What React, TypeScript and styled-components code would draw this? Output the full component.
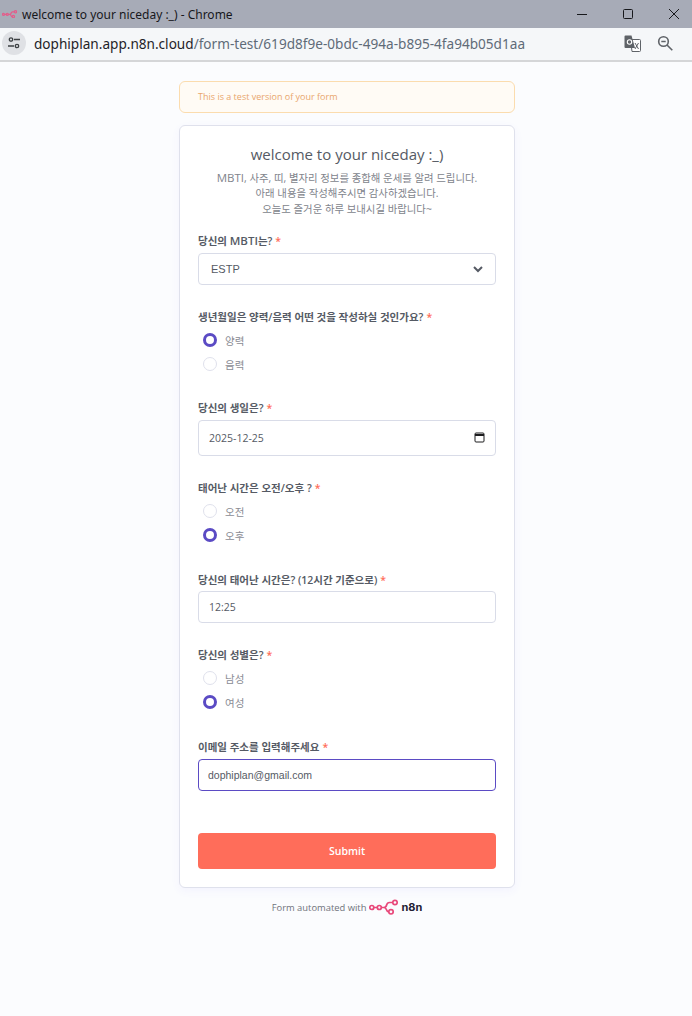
import React from 'react'
import styled, { createGlobalStyle } from 'styled-components'

const GlobalStyle = createGlobalStyle`
  html, body {
    margin: 0;
    padding: 0;
    background: #fbfcfe;
  }
  * {
    box-sizing: border-box;
  }
`

const sans = `"Open Sans", "Noto Sans CJK KR", sans-serif`

const Page = styled.div`
  width: 692px;
  height: 1016px;
  overflow: hidden;
  display: flex;
  flex-direction: column;
  font-family: ${sans};
`

const TitleBar = styled.div`
  height: 28px;
  flex: none;
  display: flex;
  align-items: center;
  padding-left: 2px;
  background: #a7abb7;
  color: #17181c;
`

const WindowTitle = styled.span`
  margin-left: 5px;
  font-family: "Noto Sans", sans-serif;
  font-size: 12px;
  white-space: nowrap;
`

const WindowControls = styled.div`
  margin-left: auto;
  margin-right: -5px;
  display: flex;
  align-items: center;
`

const WindowButton = styled.div`
  width: 46px;
  height: 28px;
  display: flex;
  align-items: center;
  justify-content: center;
`

const AddressBar = styled.div`
  height: 34px;
  flex: none;
  display: flex;
  align-items: center;
  padding: 0 19px 2px 2px;
  background: #f5f7f9;
  border-bottom: 2px solid;
  border-image: linear-gradient(#a4a5a8 50%, #d5d6d8 50%) 2;
`

const SiteButton = styled.div`
  width: 24px;
  height: 24px;
  flex: none;
  display: flex;
  align-items: center;
  justify-content: center;
  border-radius: 50%;
  background: #dfe1e5;
`

const Url = styled.div`
  margin-left: 8px;
  font-family: "Noto Sans", sans-serif;
  font-size: 13.6px;
  color: #5f6b78;
  white-space: nowrap;
`

const UrlHost = styled.span`
  color: #1f2328;
`

const AddressIcons = styled.div`
  margin-left: auto;
  display: flex;
  align-items: center;
  gap: 16px;
`

const Content = styled.main`
  width: 336px;
  margin: 19px 0 0 179px;
  display: flex;
  flex-direction: column;
`

const TestBanner = styled.div`
  height: 32px;
  padding: 0 18px 2px;
  display: flex;
  align-items: center;
  border: 1px solid #fbdcae;
  border-radius: 6px;
  background: #fffbf5;
  color: #e9a66c;
  font-size: 9px;
`

const Card = styled.form`
  margin-top: 12px;
  height: 763px;
  padding: 17px 18px 0;
  display: flex;
  flex-direction: column;
  border: 1px solid #dfe1ec;
  border-radius: 6px;
  background: #ffffff;
  box-shadow: 0 3px 10px rgba(99, 77, 255, 0.05);
`

const CardTitle = styled.h1`
  margin: 0;
  text-align: center;
  font-size: 15px;
  line-height: 22px;
  font-weight: 400;
  color: #555a64;
`

const CardIntro = styled.p`
  margin: 5px 0 0;
  text-align: center;
  font-size: 10.4px;
  line-height: 15.4px;
  color: #81848c;
`

const Latin = styled.span`
  font-size: 11.5px;
`

const Field = styled.div<{ $top: number }>`
  margin-top: ${p => p.$top}px;
  display: flex;
  flex-direction: column;
`

const Label = styled.label<{ $gap?: number }>`
  height: 16px;
  margin-bottom: ${p => p.$gap ?? 4}px;
  font-size: 10.5px;
  line-height: 16px;
  font-weight: 600;
  color: #555a64;
`

const Required = styled.span`
  margin-left: 3px;
  color: #ff6d5a;
`

const SelectWrap = styled.div`
  position: relative;
`

const inputBase = `
  display: block;
  width: 100%;
  height: 32px;
  margin: 0;
  border: 1px solid #d9dce8;
  border-radius: 4px;
  background: #ffffff;
  outline: none;
  font-size: 10.5px;
  color: #555a64;
`

const Select = styled.select`
  ${inputBase}
  appearance: none;
  padding: 0 12px;
  font-size: 11px;
  font-family: "Liberation Sans", sans-serif;
`

const Chevron = styled.svg`
  position: absolute;
  top: 11px;
  right: 13px;
  pointer-events: none;
`

const CalendarIcon = styled.svg`
  position: absolute;
  top: 12px;
  right: 11px;
  pointer-events: none;
`

const TextInput = styled.input<{ $height?: number; $focused?: boolean }>`
  ${inputBase}
  height: ${p => p.$height ?? 32}px;
  padding: 0 ${p => (p.$focused ? 9 : 10)}px;
  font-family: ${p => (p.$focused ? '"Liberation Sans", sans-serif' : sans)};
  border-color: ${p => (p.$focused ? '#5b4bc4' : '#d9dce8')};
`

const RadioGroup = styled.div`
  margin-top: -1px;
  display: flex;
  flex-direction: column;
`

const RadioRow = styled.label`
  height: 24px;
  display: flex;
  align-items: center;
  padding-left: 5px;
  font-size: 10.5px;
  color: #8a8c94;
`

const RadioInput = styled.input`
  appearance: none;
  width: 14px;
  height: 14px;
  margin: -1px 8px 0 0;
  border: 1px solid #dfe1ec;
  border-radius: 50%;
  background: #ffffff;
  &:checked {
    border: 3.5px solid #5b4bc4;
  }
`

const SubmitButton = styled.button`
  height: 36px;
  margin-top: 42px;
  padding: 0;
  border: none;
  border-radius: 4px;
  background: #ff6d5a;
  color: #ffffff;
  font-family: ${sans};
  font-size: 10.5px;
  font-weight: 600;
`

const Footer = styled.footer`
  margin-top: 11px;
  display: flex;
  align-items: center;
  justify-content: center;
  gap: 3px;
  font-size: 9.4px;
  color: #70737c;
`

const Brand = styled.span`
  font-family: "Inter", sans-serif;
  font-size: 11px;
  font-weight: 700;
  color: #1f2033;
`

const N8nLogo = ({ width, color = '#e8487a', stroke = 1.7 }: { width: number; color?: string; stroke?: number }) => (
  <svg width={width} height={(width * 16) / 29} viewBox="0 0 29 16" fill="none" stroke={color} strokeWidth={stroke}>
    <circle cx="2.800" cy="8.500" r="2" />
    <circle cx="10.300" cy="8.500" r="2" />
    <circle cx="26" cy="3.500" r="2.200" />
    <circle cx="22" cy="12.800" r="2.200" />
    <path d="M4.800 8.500h3.500M12.300 8.500h2.700c2 0 2.400-1.300 2.700-2.700.4-1.700 1.300-2.300 2.800-2.300h2.800M15 8.500c1.600 0 2.100 1 2.500 2.300.4 1.400 1 2 2.300 2" />
  </svg>
)

const MBTI = ['ESTP']

const RadioField = ({ name, options, checked }: { name: string; options: string[]; checked: string }) => (
  <RadioGroup>
    {options.map(o => (
      <RadioRow key={o}>
        <RadioInput type="radio" name={name} value={o} defaultChecked={o === checked} />
        {o}
      </RadioRow>
    ))}
  </RadioGroup>
)

const App = () => (
  <Page>
    <GlobalStyle />
    <TitleBar>
      <N8nLogo width={15} color="#e35d8a" stroke={2.4} />
      <WindowTitle>welcome to your niceday :_) - Chrome</WindowTitle>
      <WindowControls>
        <WindowButton>
          <svg width="12" height="12" viewBox="0 0 12 12" stroke="#17181c" fill="none">
            <path d="M1 6.500h10" />
          </svg>
        </WindowButton>
        <WindowButton>
          <svg width="12" height="12" viewBox="0 0 12 12" stroke="#17181c" fill="none">
            <rect x="1.500" y="1.500" width="9" height="9" rx="1" />
          </svg>
        </WindowButton>
        <WindowButton>
          <svg width="12" height="12" viewBox="0 0 12 12" stroke="#17181c" fill="none">
            <path d="M1 1l10 10M11 1L1 11" />
          </svg>
        </WindowButton>
      </WindowControls>
    </TitleBar>
    <AddressBar>
      <SiteButton>
        <svg width="14" height="14" viewBox="0 0 14 14" fill="none" stroke="#3c4043" strokeWidth="1.300">
          <circle cx="4" cy="3.500" r="1.700" />
          <circle cx="10" cy="10" r="1.700" />
          <path d="M7 3.500h6M1 10h6" />
        </svg>
      </SiteButton>
      <Url>
        <UrlHost>dophiplan.app.n8n.cloud</UrlHost>/form-test/619d8f9e-0bdc-494a-b895-4fa94b05d1aa
      </Url>
      <AddressIcons>
        <svg width="17" height="17" viewBox="0 0 17 17" fill="none">
          <path d="M6.500 4.500h9a1 1 0 0 1 1 1v10a1 1 0 0 1-1 1H8z" fill="#fff" stroke="#5f6368" />
          <path d="M1.500 .5h6l3.500 12.500H1.500a1 1 0 0 1-1-1V1.500a1 1 0 0 1 1-1z" fill="#5f6368" />
          <path d="M11 8l3.500 6M14.500 8L11 14" stroke="#5f6368" />
          <circle cx="5.500" cy="7" r="2.200" stroke="#fff" strokeWidth="1.100" />
        </svg>
        <svg width="16" height="16" viewBox="0 0 16 16" fill="none" stroke="#5f6368" strokeWidth="1.600">
          <circle cx="6.500" cy="6.500" r="4.800" />
          <path d="M4.300 6.500h4.400M10 10l5.300 5.300" />
        </svg>
      </AddressIcons>
    </AddressBar>
    <Content>
      <TestBanner>This is a test version of your form</TestBanner>
      <Card>
        <CardTitle>welcome to your niceday :_)</CardTitle>
        <CardIntro>
          <Latin>MBTI</Latin>, 사주, 띠, 별자리 정보를 종합해 운세를 알려 드립니다.
          <br />
          아래 내용을 작성해주시면 감사하겠습니다.
          <br />
          오늘도 즐거운 하루 보내시길 바랍니다~
        </CardIntro>
        <Field $top={16}>
          <Label>당신의 <Latin>MBTI</Latin>는?<Required>*</Required></Label>
          <SelectWrap>
            <Select defaultValue="ESTP">
              {MBTI.map(m => <option key={m}>{m}</option>)}
            </Select>
            <Chevron width="10" height="10" viewBox="0 0 10 10" fill="none" stroke="#555a64" strokeWidth="2">
              <path d="M1 3l4 4 4-4" />
            </Chevron>
          </SelectWrap>
        </Field>
        <Field $top={24}>
          <Label>생년월일은 양력/음력 어떤 것을 작성하실 것인가요?<Required>*</Required></Label>
          <RadioField name="calendar" options={['양력', '음력']} checked="양력" />
        </Field>
        <Field $top={24}>
          <Label>당신의 생일은?<Required>*</Required></Label>
          <SelectWrap>
            <TextInput type="text" defaultValue="2025-12-25" $height={36} />
            <CalendarIcon width="11" height="11" viewBox="0 0 11 11" fill="none" stroke="#1c1c1e">
              <rect x="1" y="1" width="9" height="9" rx="1" />
              <path d="M1 3h9" strokeWidth="2" />
            </CalendarIcon>
          </SelectWrap>
        </Field>
        <Field $top={24}>
          <Label>태어난 시간은 오전/오후 ?<Required>*</Required></Label>
          <RadioField name="ampm" options={['오전', '오후']} checked="오후" />
        </Field>
        <Field $top={25}>
          <Label $gap={3}>당신의 태어난 시간은? (12시간 기준으로)<Required>*</Required></Label>
          <TextInput type="text" defaultValue="12:25" />
        </Field>
        <Field $top={24}>
          <Label>당신의 성별은?<Required>*</Required></Label>
          <RadioField name="gender" options={['남성', '여성']} checked="여성" />
        </Field>
        <Field $top={25}>
          <Label>이메일 주소를 입력해주세요<Required>*</Required></Label>
          <TextInput type="email" defaultValue="dophiplan@gmail.com" $focused />
        </Field>
        <SubmitButton type="button">Submit</SubmitButton>
      </Card>
      <Footer>
        Form automated with
        <N8nLogo width={29} />
        <Brand>n8n</Brand>
      </Footer>
    </Content>
  </Page>
)

export default App
